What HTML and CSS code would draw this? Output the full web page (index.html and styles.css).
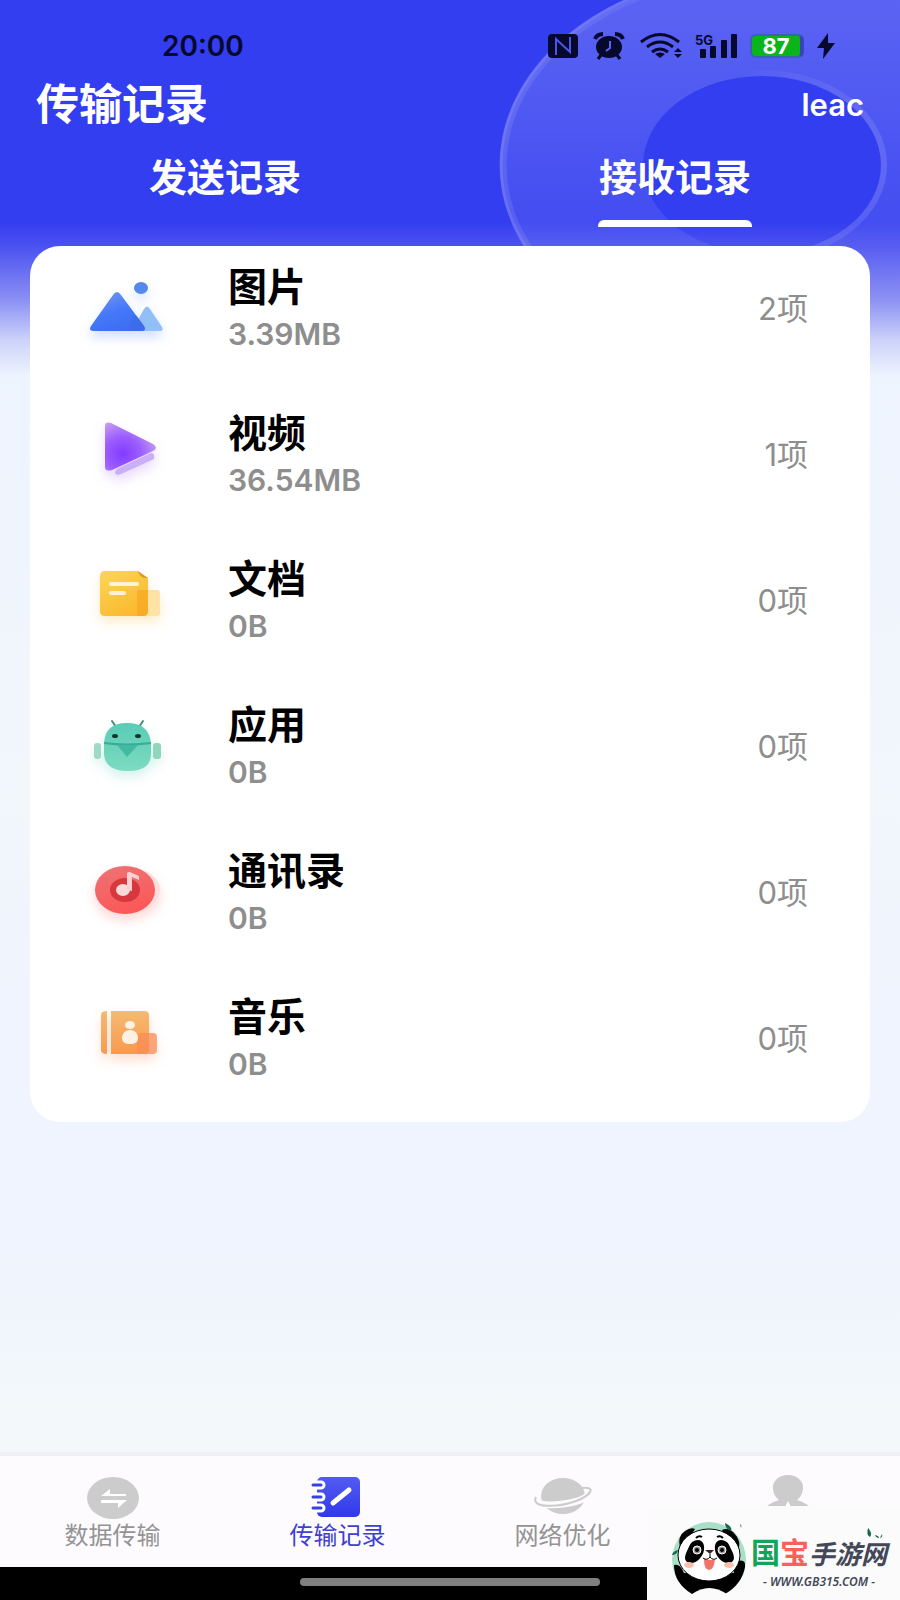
FILE: index.html
```html
<!DOCTYPE html>
<html lang="zh-CN">
<head>
    <meta charset="UTF-8">
    <meta name="viewport" content="width=device-width, initial-scale=1.0">
    <title>传输记录</title>
    <link rel="stylesheet" href="styles.css">
</head>
<body>
    <!-- 顶部装饰圆环 -->
    <svg class="rings" width="420" height="380" viewBox="480 0 420 380" aria-hidden="true">
        <defs>
            <linearGradient id="ringFill" x1="0" y1="0" x2="0" y2="1">
                <stop offset="0.1" stop-color="#fff" stop-opacity="0.19"/>
                <stop offset="0.7" stop-color="#fff" stop-opacity="0.07"/>
                <stop offset="0.9" stop-color="#fff" stop-opacity="0"/>
            </linearGradient>
            <linearGradient id="ringEdge" x1="0" y1="0" x2="1" y2="0">
                <stop offset="0" stop-color="#fff" stop-opacity="0.1"/>
                <stop offset="0.3" stop-color="#fff" stop-opacity="0.05"/>
                <stop offset="0.5" stop-color="#fff" stop-opacity="0"/>
            </linearGradient>
            <linearGradient id="holeEdge" x1="0" y1="0" x2="1" y2="0">
                <stop offset="0.4" stop-color="#fff" stop-opacity="0"/>
                <stop offset="1" stop-color="#fff" stop-opacity="0.12"/>
            </linearGradient>
        </defs>
        <path fill="url(#ringFill)" fill-rule="evenodd" d="M500 165a266 195 0 1 0 532 0a266 195 0 1 0 -532 0zM643 165a119 89 0 1 0 238 0a119 89 0 1 0 -238 0z"/>
        <ellipse cx="766" cy="165" rx="263" ry="192" fill="none" stroke="url(#ringEdge)" stroke-width="7"/>
        <ellipse cx="766" cy="165" rx="265" ry="194" fill="none" stroke="url(#ringEdge)" stroke-width="3"/>
        <ellipse cx="762" cy="165" rx="122" ry="92" fill="none" stroke="url(#holeEdge)" stroke-width="6"/>
    </svg>

    <header class="header">
        <div class="status-bar">
            <span class="time">20:00</span>
            <div class="status-icons">
                <svg width="30" height="28" viewBox="0 0 30 28"><rect y="2" width="30" height="24" rx="4" fill="#06082c"/><path d="M8 23V7L22 20V5" fill="none" stroke="#4c54ee" stroke-width="2"/></svg>
                <svg width="36" height="28" viewBox="0 0 36 28"><ellipse cx="18" cy="15" rx="13" ry="11" fill="#06082c"/><path d="M4 7q2-5 8-5M24 2q6 0 8 5" fill="none" stroke="#06082c" stroke-width="4"/><path d="M10 23l-3 4M26 23l3 4" stroke="#06082c" stroke-width="3"/><path d="M19 9v7l-4 3" fill="none" stroke="#5a62ee" stroke-width="2"/></svg>
                <svg width="42" height="28" viewBox="0 0 42 28"><g fill="none" stroke="#06082c" stroke-width="3"><path d="M1 10q19-15 38 0"/><path d="M7 15q13-10 26 0"/><path d="M12 20q8-6 16 0"/></g><path d="M15 22q5-3 10 0l-5 4zM34 20l4-4 4 4zM34 22h8l-4 4z" fill="#06082c"/></svg>
                <svg width="42" height="28" viewBox="0 0 42 28" fill="#06082c"><text x="0" y="13" class="net">5G</text><rect x="5" y="17" width="6" height="9" rx="1"/><rect x="15" y="14" width="6" height="12" rx="1"/><rect x="26" y="8" width="6" height="18" rx="1"/><rect x="36" y="2" width="6" height="24" rx="1"/></svg>
                <span class="battery">87</span>
                <svg width="18" height="28" viewBox="0 0 18 28"><path d="M11 1L0 16h7L6 27 18 11h-7z" fill="#06082c"/></svg>
            </div>
        </div>
        <div class="title-row">
            <h1>传输记录</h1>
            <a href="#" class="user">leac</a>
        </div>
        <div class="tabs">
            <button type="button" class="tab">发送记录</button>
            <button type="button" class="tab active">接收记录</button>
        </div>
    </header>

    <main class="main">
        <ul class="card">
            <li class="row">
                <svg class="icon blue" width="100" height="80" viewBox="0 0 100 80">
                    <defs>
                        <linearGradient id="mount" x1="0" y1="0" x2="0.5" y2="1"><stop offset="0" stop-color="#7b9bea"/><stop offset="0.6" stop-color="#4477fb"/><stop offset="1" stop-color="#3d70ee"/></linearGradient>
                    </defs>
                    <path d="M68 39q3-5 6 0l12 18q2 4-2 4H56z" fill="#92bff8"/>
                    <path d="M37 25q4-6 8 0l23 31q3 5-3 5H18q-6 0-3-5z" fill="url(#mount)"/>
                    <path d="M60 45l8 11q3 5-3 5H54q-1-8 6-16z" fill="#376ae0" opacity="0.5"/>
                    <ellipse cx="65" cy="18" rx="7" ry="6" fill="#5488ea"/>
                </svg>
                <div class="info"><h2>图片</h2><p>3.39MB</p></div>
                <span class="count">2项</span>
            </li>
            <li class="row">
                <svg class="icon violet" width="100" height="80" viewBox="0 0 100 80">
                    <defs>
                        <radialGradient id="play" cx="0.35" cy="0.65" r="0.7"><stop offset="0" stop-color="#833bff"/><stop offset="0.5" stop-color="#9b5dff"/><stop offset="1" stop-color="#c49cf3"/></radialGradient>
                    </defs>
                    <path d="M41 53l34-16q4 0 3 6L45 58q-6 2-6-2z" fill="#c9aef8"/>
                    <path d="M29 10q0-5 6-3l42 21q6 4 0 7L36 54q-7 2-7-3z" fill="url(#play)"/>
                </svg>
                <div class="info"><h2>视频</h2><p>36.54MB</p></div>
                <span class="count">1项</span>
            </li>
            <li class="row">
                <svg class="icon yellow" width="100" height="80" viewBox="0 0 100 80">
                    <defs>
                        <linearGradient id="doc" x1="0.2" y1="0" x2="0.8" y2="1"><stop offset="0" stop-color="#fbd454"/><stop offset="1" stop-color="#fbb62c"/></linearGradient>
                    </defs>
                    <rect x="60" y="28" width="24" height="26" rx="3" fill="#ffe2a6"/>
                    <path d="M29 9h33q3 4 10 7v33q0 5-5 5H29q-5 0-5-5V14q0-5 5-5z" fill="url(#doc)"/>
                    <path d="M61 28h11v21q0 5-5 5h-6z" fill="#f6a623" opacity="0.65"/>
                    <path d="M62 9l10 7q-8 1-10-7z" fill="#d99b26"/>
                    <path d="M35 22h26M35 31h13" stroke="#fff3d4" stroke-width="4" stroke-linecap="round"/>
                </svg>
                <div class="info"><h2>文档</h2><p>0B</p></div>
                <span class="count">0项</span>
            </li>
            <li class="row">
                <svg class="icon green" width="100" height="80" viewBox="0 0 100 80">
                    <defs>
                        <linearGradient id="robot" x1="0" y1="0" x2="0" y2="1"><stop offset="0" stop-color="#5bcbb5"/><stop offset="1" stop-color="#7bdcc1"/></linearGradient>
                    </defs>
                    <path d="M36 13l4 6M67 13l-4 6" stroke="#4a8a7d" stroke-width="2" stroke-linecap="round"/>
                    <rect x="18" y="35" width="7" height="16" rx="3" fill="#9edbc6"/>
                    <rect x="77" y="35" width="8" height="16" rx="3" fill="#8fd6bd"/>
                    <path d="M28 35q1-20 23-20t24 20v11q0 17-23 17T28 46z" fill="url(#robot)"/>
                    <path d="M28 35q23 3 47 0" fill="none" stroke="#38ad96" stroke-width="2"/>
                    <path d="M41 37h21L51 49z" fill="#42b9a0"/>
                    <ellipse cx="39" cy="28" rx="3" ry="2" fill="#12372f"/>
                    <ellipse cx="62" cy="28" rx="3" ry="2" fill="#12372f"/>
                </svg>
                <div class="info"><h2>应用</h2><p>0B</p></div>
                <span class="count">0项</span>
            </li>
            <li class="row">
                <svg class="icon red" width="100" height="80" viewBox="0 0 100 80">
                    <defs>
                        <linearGradient id="disc" x1="0.2" y1="0" x2="0.5" y2="1"><stop offset="0" stop-color="#ee7274"/><stop offset="1" stop-color="#fc5757"/></linearGradient>
                    </defs>
                    <ellipse cx="54" cy="36" rx="30" ry="22" fill="#ffdcdc"/>
                    <ellipse cx="49" cy="36" rx="30" ry="24" fill="url(#disc)"/>
                    <ellipse cx="49" cy="36" rx="15" ry="12" fill="#d7383d"/>
                    <ellipse cx="47" cy="36" rx="7" ry="6" fill="#fbd9d9"/>
                    <path d="M51 36V19q2-2 5 0l7 3v4l-7-3v14z" fill="#fbd0d0"/>
                </svg>
                <div class="info"><h2>通讯录</h2><p>0B</p></div>
                <span class="count">0项</span>
            </li>
            <li class="row">
                <svg class="icon orange" width="100" height="80" viewBox="0 0 100 80">
                    <defs>
                        <linearGradient id="book" x1="0" y1="0" x2="0" y2="1"><stop offset="0" stop-color="#f7b970"/><stop offset="1" stop-color="#f79a50"/></linearGradient>
                    </defs>
                    <path d="M31 11v43q-6 0-6-4V15q0-4 6-4z" fill="url(#book)"/>
                    <path d="M35 11h33q5 0 5 4v35q0 4-5 4H35z" fill="url(#book)"/>
                    <rect x="61" y="33" width="20" height="21" rx="4" fill="#f98c56" opacity="0.75"/>
                    <ellipse cx="54" cy="25" rx="5" ry="4" fill="#fff2e5"/>
                    <path d="M54 30c5 0 8 4 8 8q0 6-8 6t-8-6c0-4 3-8 8-8z" fill="#fff2e5"/>
                </svg>
                <div class="info"><h2>音乐</h2><p>0B</p></div>
                <span class="count">0项</span>
            </li>
        </ul>
    </main>

    <!-- 底部导航 -->
    <nav class="bottom-nav">
        <a href="#" class="nav-item">
            <svg width="64" height="48" viewBox="0 0 64 48"><ellipse cx="32" cy="24" rx="26" ry="21" fill="#ccc"/><path d="M20 22l9-7v5h16v2zM46 26l-9 8v-5H20v-3z" fill="#fff"/></svg>
            <span>数据传输</span>
        </a>
        <a href="#" class="nav-item active">
            <svg width="64" height="48" viewBox="0 0 64 48">
                <defs>
                    <linearGradient id="note" x1="0" y1="0" x2="0" y2="1"><stop offset="0" stop-color="#525bf0"/><stop offset="1" stop-color="#3039ea"/></linearGradient>
                </defs>
                <rect x="11" y="3" width="43" height="40" rx="5" fill="url(#note)"/>
                <path d="M9 11h6M9 23h6M9 34h6" stroke="#fff" stroke-width="9" stroke-linecap="round"/>
                <path d="M7 11h8M7 23h8M7 34h8" stroke="#373fe6" stroke-width="3" stroke-linecap="round"/>
                <path d="M27 29L43 16" stroke="#fff" stroke-width="5" stroke-linecap="round"/>
            </svg>
            <span>传输记录</span>
        </a>
        <a href="#" class="nav-item">
            <svg width="64" height="48" viewBox="0 0 64 48">
                <ellipse cx="32" cy="22" rx="22" ry="18" fill="#ccc"/>
                <path d="M4 25q3 8 28 5t27-13" fill="none" stroke="#fdfbfe" stroke-width="7"/>
                <path d="M5 23c-6 12 24 10 40 4s20-15 6-13" fill="none" stroke="#ccc" stroke-width="2"/>
            </svg>
            <span>网络优化</span>
        </a>
        <a href="#" class="nav-item" aria-label="我的">
            <svg width="64" height="48" viewBox="0 0 64 48"><path d="M32 1c10 0 16 7 15 14-1 7-4 9-6 11 10 3 17 8 17 20H6c0-12 7-17 17-20-2-2-5-4-6-11C16 8 22 1 32 1z" fill="#ccc"/><path d="M32 27l4 8h-8z" fill="#fff"/></svg>
        </a>
    </nav>
    <div class="home-bar"><div class="handle"></div></div>

    <!-- 右下角站点标识 -->
    <div class="brand">
        <svg width="80" height="76" viewBox="0 0 80 76" aria-hidden="true">
            <ellipse cx="42" cy="39" rx="37" ry="38" fill="#a9dfc9"/>
            <path d="M7 44q6-2 10 8h50q-2-8 4-12 8-2 7 6-3 17-20 27H25Q7 62 7 44z" fill="#000"/>
            <path d="M25 73q17-12 35 0v3H25z" fill="#fbfbfb"/>
            <path d="M13 27q-3-12 5-17 6-4 10-2L18 24zM55 9q6-3 12 3 8 8 4 18l-7-2z" fill="#000"/>
            <ellipse cx="42" cy="34" rx="31" ry="26" fill="#fff" stroke="#000" stroke-width="1"/>
            <path d="M27 20c7-3 11 2 10 9s-8 14-14 13-6-6-3-12 3-8 7-10zM58 20c-7-3-11 2-10 9s8 14 14 13 6-6 3-12-3-8-7-10z" fill="#000"/>
            <g fill="#999" stroke="#fff"><circle cx="30" cy="29" r="4"/><circle cx="55" cy="29" r="4"/></g>
            <circle cx="30" cy="29" r="2" fill="#000"/><circle cx="55" cy="29" r="2" fill="#000"/>
            <path d="M29 17q3-3 6-1M50 16q3-2 6 1" fill="none" stroke="#000" stroke-width="2"/>
            <path d="M38 29h9l-4 4z" fill="#3c2020"/>
            <path d="M37 38q10 2 11 0-1 11-6 11t-5-11z" fill="#f3736b"/>
            <path d="M43 33v3q-3 4-7 1M43 36q3 4 7 1" fill="none" stroke="#000"/>
            <ellipse cx="22" cy="44" rx="5" ry="3" fill="#f9bfae"/>
            <ellipse cx="62" cy="44" rx="5" ry="3" fill="#f9bfae"/>
            <path d="M58 2q8 4 6 8-6-2-6-8zM73 3q2 1 1 4M68 6l3 2M2 31l3 3M5 34q1-4 6-5-1 5-6 5" fill="#176a49"/>
        </svg>
        <div class="brand-text">
            <div class="brand-name"><span class="guo">国</span><span class="bao">宝</span><i>手游网</i></div>
            <div class="brand-url">- WWW.GB315.COM -</div>
        </div>
        <svg class="leaf" width="18" height="14" viewBox="0 0 18 14" aria-hidden="true"><path d="M2 1q5 5 2 9Q0 8 2 1zM9 8q4 1 4 3-3 0-4-3zM16 7q1 3-2 4" fill="#176a49"/></svg>
    </div>
</body>
</html>
```
FILE: styles.css
```css
* {
    box-sizing: border-box;
}

body {
    margin: 0;
    position: relative;
    min-height: 100vh;
    display: flex;
    flex-direction: column;
    font-family: Inter, "Noto Sans CJK SC", sans-serif;
    /* 顶部蓝色，向下渐变为浅蓝灰 */
    background: linear-gradient(#333ef0 0, #333ef0 222px, #4b51f0 246px, #8b90f3 300px, #ccd2f9 340px, #eef4fe 376px, #f2f7fc 800px, #eff4fe 1000px, #eff4fe 1250px, #f3f8fb 1400px);
}

h1,
h2,
p,
ul {
    margin: 0;
    padding: 0;
}

a {
    text-decoration: none;
}

.rings {
    position: absolute;
    top: 0;
    right: 0;
}

.header {
    position: relative;
    color: white;
}

.status-bar {
    display: flex;
    justify-content: space-between;
    align-items: center;
    height: 62px;
    padding: 30px 65px 0 162px;
}

.time {
    color: #06082c;
    font-size: 28px;
    font-weight: 600;
}

.status-icons {
    display: flex;
    align-items: center;
    gap: 13px;
}

.net {
    font-size: 13px;
    font-weight: 700;
}

.battery {
    width: 54px;
    height: 24px;
    border: 2px solid #3b62b4;
    border-right: 4px solid #3c43b8;
    border-radius: 6px;
    background-color: #0ab51c;
    font-size: 22px;
    font-weight: 700;
    line-height: 20px;
    text-align: center;
}

.title-row {
    display: flex;
    justify-content: space-between;
    align-items: center;
    height: 84px;
    padding: 0 36px;
}

.title-row h1 {
    font-size: 43px;
    font-weight: 700;
    line-height: 60px;
}

.user {
    color: white;
    font-size: 31px;
    font-weight: 600;
}

.tabs {
    display: flex;
    height: 100px;
    padding-top: 2px;
}

.tab {
    flex: 1;
    display: flex;
    flex-direction: column;
    align-items: center;
    padding: 0;
    border: none;
    background: none;
    color: white;
    font-family: inherit;
    font-size: 38px;
    font-weight: 700;
    line-height: 58px;
}

.tab.active::after {
    content: "";
    width: 154px;
    height: 7px;
    margin-top: 14px;
    border-radius: 6px 6px 0 0;
    background-color: white;
}

.main {
    position: relative;
    flex: 1;
    padding: 0 30px 24px;
}

.card {
    list-style: none;
    border-radius: 30px;
    background-color: white;
}

.row {
    display: flex;
    align-items: center;
    height: 146px;
    padding: 0 62px 18px 46px;
}

.icon {
    margin-right: 52px;
}

.blue {
    filter: drop-shadow(0 6px 6px #4477fb40);
}

.violet {
    filter: drop-shadow(0 6px 6px #9b5dff40);
}

.yellow {
    filter: drop-shadow(0 6px 6px #fbb62c40);
}

.green {
    filter: drop-shadow(0 6px 6px #5bcbb540);
}

.red {
    filter: drop-shadow(0 6px 6px #fc575740);
}

.orange {
    filter: drop-shadow(0 6px 6px #f7764040);
}

.info {
    flex: 1;
    padding-bottom: 2px;
}

.info h2 {
    color: black;
    font-size: 39px;
    font-weight: 700;
    line-height: 50px;
}

.info p {
    color: #8e8e8e;
    font-size: 30px;
    font-weight: 600;
    line-height: 44px;
}

.count {
    padding-bottom: 7px;
    color: #8e8e8e;
    font-size: 31px;
}

.bottom-nav {
    display: flex;
    height: 115px;
    border-top: 4px solid #eef0f5;
    background-color: #fdfbfe;
}

.nav-item {
    flex: 1;
    display: flex;
    flex-direction: column;
    align-items: center;
    padding-top: 18px;
    color: #949494;
    font-size: 24px;
    line-height: 28px;
}

.nav-item.active {
    color: #3d40d0;
}

.home-bar {
    height: 33px;
    padding-top: 11px;
    background-color: black;
}

.handle {
    width: calc(100% / 3);
    height: 8px;
    margin: 0 auto;
    border-radius: 4px;
    background-color: #808080;
}

.brand {
    position: absolute;
    right: 0;
    bottom: 0;
    display: flex;
    width: 253px;
    height: 94px;
    padding: 15px 0 0 20px;
    background-color: #fbfbfb;
    color: #434758;
}

.brand-text {
    padding: 13px 0 0 4px;
    text-align: center;
}

.brand-name {
    font-size: 26px;
    font-weight: 700;
    line-height: 40px;
    white-space: nowrap;
}

.guo,
.bao {
    font-size: 29px;
}

.guo {
    color: #12a45a;
}

.bao {
    color: #fb6159;
}

.brand-url {
    font-family: "Noto Sans", sans-serif;
    font-size: 12px;
    font-style: italic;
    font-weight: 600;
    line-height: 14px;
}

.leaf {
    position: absolute;
    top: 21px;
    right: 16px;
}
```
